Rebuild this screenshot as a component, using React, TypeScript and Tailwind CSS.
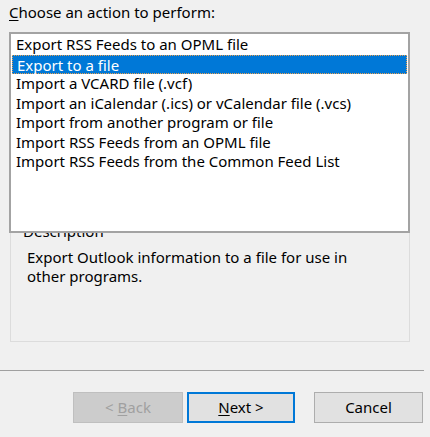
import { useState } from 'react';

const actions = [
  'Export RSS Feeds to an OPML file',
  'Export to a file',
  'Import a VCARD file (.vcf)',
  'Import an iCalendar (.ics) or vCalendar file (.vcs)',
  'Import from another program or file',
  'Import RSS Feeds from an OPML file',
  'Import RSS Feeds from the Common Feed List',
];

export default function App() {
  const [selected, setSelected] = useState(1);

  return (
    <div className="w-[430px] h-[437px] bg-[#f0f0f0] text-black overflow-hidden font-['Noto_Sans',sans-serif] text-[15px] flex flex-col">
      {/* prompt */}
      <div className="h-[32px] pl-[9px] pt-[2px] leading-[20px]">
        <span className="underline underline-offset-2">C</span>hoose an action to perform:
      </div>

      {/* action list */}
      <div className="relative z-10 ml-[9px] w-[401px] h-[201px] border-2 border-[#a3a3a3] bg-white p-[1px]">
        {actions.map((a, i) => (
          <div
            key={a}
            onClick={() => setSelected(i)}
            className={`h-[19.5px] leading-[19px] pl-[4px] whitespace-nowrap ${
              i === selected ? 'bg-[#0078d7] text-white border border-dotted border-[#e8a050] pl-[3px] leading-[17px]' : ''
            }`}
          >
            {a}
          </div>
        ))}
      </div>

      {/* description group */}
      <div className="-mt-[10px] ml-[10px] w-[400px] h-[119px] border border-[#dcdcdc] pl-[12px]">
        <div className="leading-[16px] mt-[-1px]">Description</div>
        <div className="pl-[4px] mt-[9px] leading-[19px] w-[362px]">
          Export Outlook information to a file for use in other programs.
        </div>
      </div>

      {/* separator */}
      <div className="mt-[28px] w-[424px] border-t border-[#a0a0a0]" />

      {/* buttons */}
      <div className="mt-[21px] flex">
        <button
          disabled
          className="ml-[73px] w-[110px] h-[31px] bg-[#cccccc] border border-[#bfbfbf] text-[#a0a0a0]"
        >
          &lt; <span className="underline underline-offset-2">B</span>ack
        </button>
        <button className="ml-[4px] w-[108px] h-[31px] bg-[#e1e1e1] border-2 border-[#0078d7]">
          <span className="underline underline-offset-2">N</span>ext &gt;
        </button>
        <button className="ml-[19px] w-[109px] h-[31px] bg-[#e1e1e1] border border-[#adadad]">
          Cancel
        </button>
      </div>
    </div>
  );
}
